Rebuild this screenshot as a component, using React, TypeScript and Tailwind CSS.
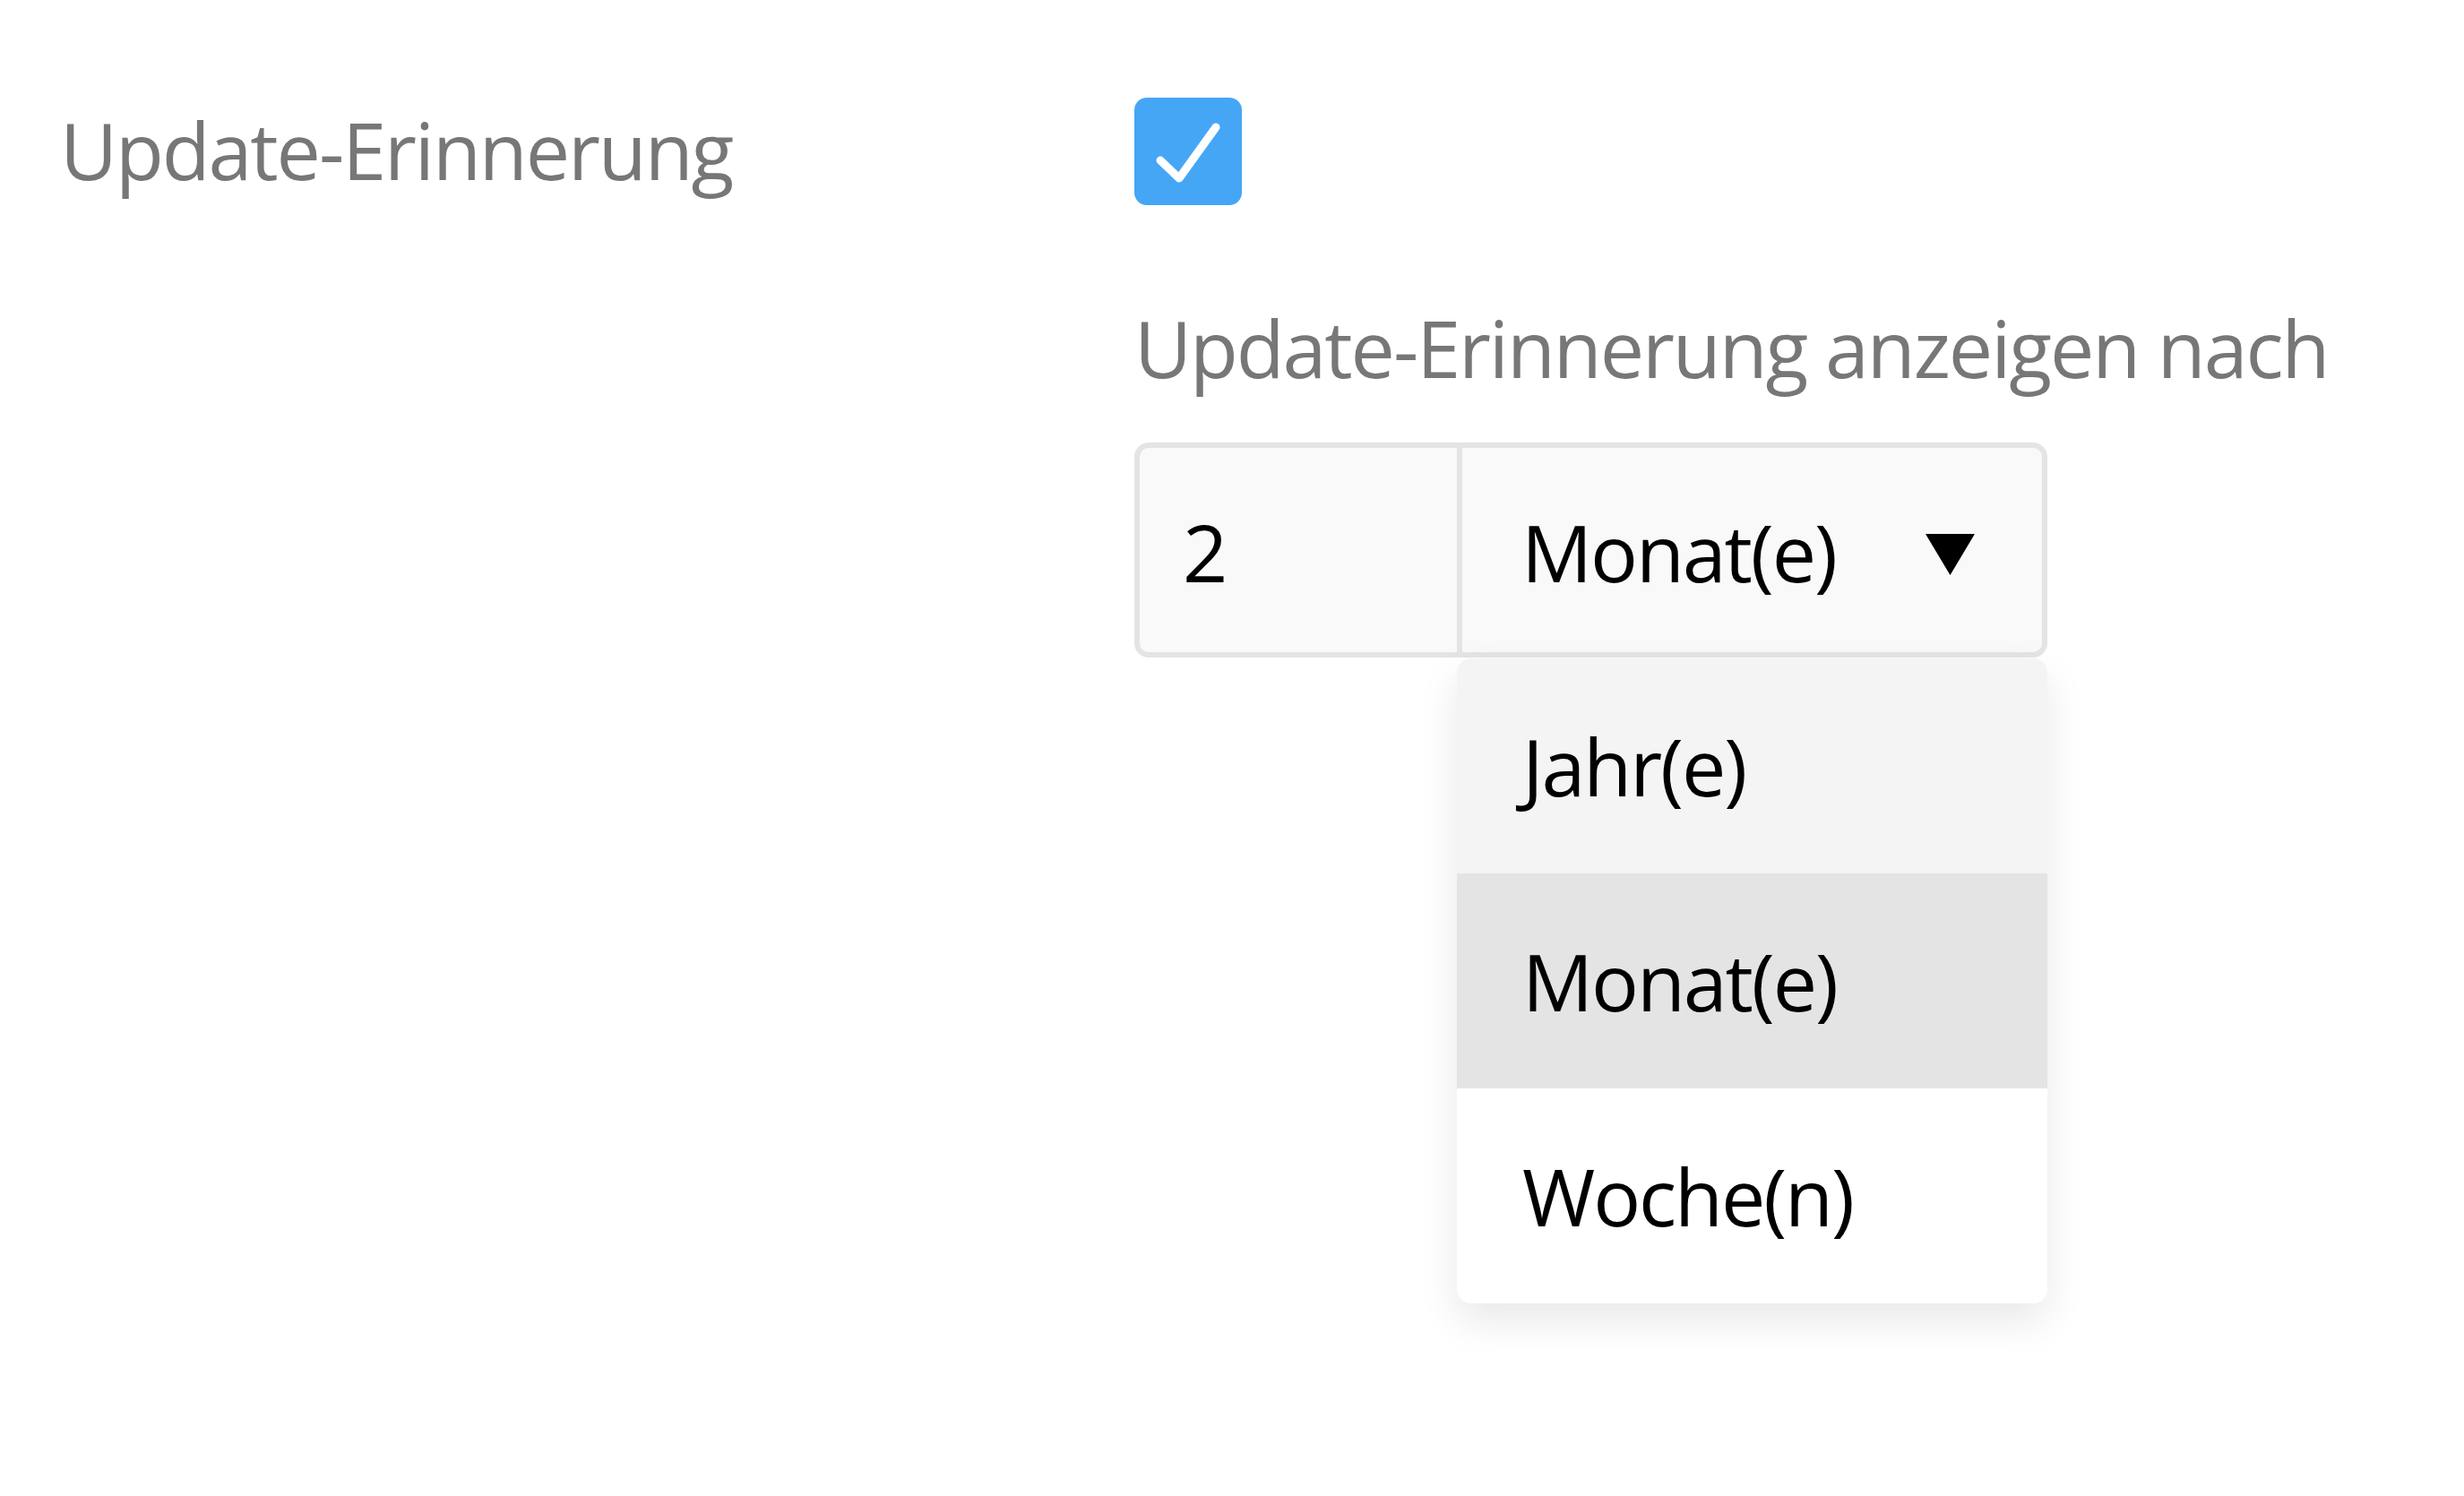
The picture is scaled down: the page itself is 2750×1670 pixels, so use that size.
import React from 'react'

const font = { fontFamily: '"Open Sans", "Liberation Sans", sans-serif' }

function CheckBox() {
  return (
    <div className="w-[120px] h-[120px] mt-[2px] rounded-[14px] bg-[#46a6f6] flex items-center justify-center">
      <svg width="120" height="120" viewBox="0 0 120 120" fill="none">
        <polyline
          points="29,70 50,90 91,33"
          stroke="white"
          strokeWidth="9"
          strokeLinecap="round"
          strokeLinejoin="round"
        />
      </svg>
    </div>
  )
}

const options = [
  { label: 'Jahr(e)', cls: 'bg-[#f4f4f4]' },
  { label: 'Monat(e)', cls: 'bg-[#e4e4e4]' },
  { label: 'Woche(n)', cls: 'bg-white' },
]

export default function App() {
  return (
    <div className="min-h-screen w-full bg-white text-[88px] leading-[120px] tracking-[-2.1px]" style={font}>
      <div className="flex items-start pt-[107px] pl-[67px]">
        <div className="w-[1199px] text-[#777777]">Update-Erinnerung</div>

        <div className="flex flex-col">
          <CheckBox />

          <div className="mt-[99px] text-[#777777]">Update-Erinnerung anzeigen nach</div>

          <div className="relative mt-[46px] w-[1019px]">
            <div className="flex h-[240px] rounded-[16px] border-[6px] border-[#e4e4e4] bg-[#f9f9f9] text-black">
              <div className="w-[354px] flex items-center pl-[48px] pt-[4px]">2</div>
              <div className="w-[6px] bg-[#e4e4e4]" />
              <div className="flex-1 flex items-center justify-between pl-[66px] pr-[75px] pt-[4px]">
                <span>Monat(e)</span>
                <svg width="55" height="46" viewBox="0 0 55 46" className="mt-[6px]">
                  <polygon points="0,0 55,0 27.5,46" fill="black" />
                </svg>
              </div>
            </div>

            <div className="absolute top-full left-[360px] right-0 mt-[1px] rounded-[16px] overflow-hidden bg-white shadow-[0_20px_45px_rgba(0,0,0,0.09)]">
              {options.map((o) => (
                <div key={o.label} className={`h-[240px] flex items-center pl-[73px] text-black ${o.cls}`}>
                  {o.label}
                </div>
              ))}
            </div>
          </div>
        </div>
      </div>
    </div>
  )
}
